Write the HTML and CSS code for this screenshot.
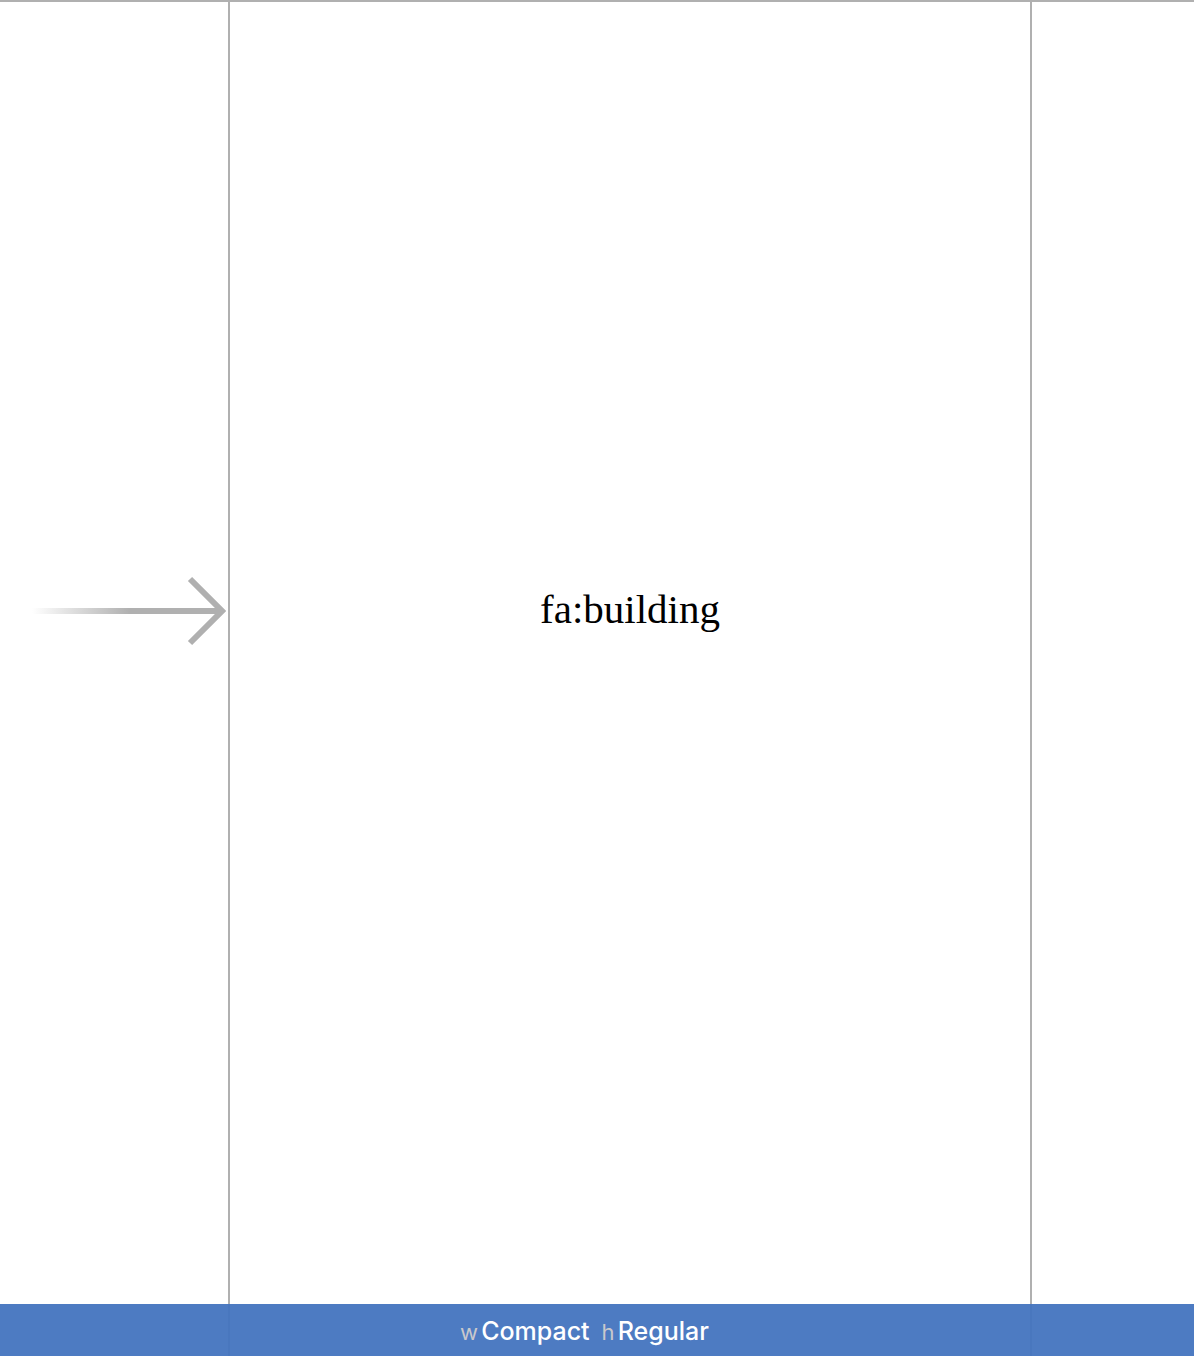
FILE: index.html
```html
<!DOCTYPE html>
<html lang="en">
<head>
<meta charset="utf-8">
<meta name="viewport" content="width=device-width, initial-scale=1">
<title>Storyboard</title>
<link rel="stylesheet" href="styles.css">
</head>
<body>
<main class="canvas">
  <div class="entry">
    <svg class="entry-arrow" width="194" height="70" viewBox="0 0 194 70" role="img" aria-label="Initial view controller">
      <defs>
        <linearGradient id="fade" gradientUnits="userSpaceOnUse" x1="0" y1="0" x2="98" y2="0">
          <stop offset="0" stop-color="#b0b0b0" stop-opacity="0"/>
          <stop offset="1" stop-color="#b0b0b0"/>
        </linearGradient>
      </defs>
      <rect x="0" y="32" width="188" height="6" fill="url(#fade)"/>
      <path d="M158 3 L190 35 L158 67" fill="none" stroke="#b0b0b0" stroke-width="6"/>
    </svg>
  </div>
  <section class="scene">
    <p class="scene-label">fa:building</p>
  </section>
</main>
<footer class="size-bar">
  <button class="size-class" type="button"><span class="axis">w</span><span class="value">Compact</span><span class="axis axis-height">h</span><span class="value">Regular</span></button>
</footer>
</body>
</html>
```

FILE: styles.css
```css
* {
  box-sizing: border-box;
}

body {
  display: grid;
  grid-template-rows: 1fr auto;
  min-height: 100vh;
  margin: 0;
  background: #fff;
}

/* The canvas runs on beneath the translucent size bar. */
.canvas {
  display: grid;
  grid-area: 1 / 1 / 3 / 2;
  grid-template-columns: 228fr 804fr 162fr;
  border-top: 2px solid #b0b0b0;
}

.entry {
  display: flex;
  align-items: center;
  justify-content: flex-end;
  padding: 0 2px 136px 0;
}

.entry-arrow {
  display: block;
}

.scene {
  display: flex;
  align-items: center;
  justify-content: center;
  padding-bottom: 140px;
  border: solid #b0b0b0;
  border-width: 0 2px;
}

.scene-label {
  margin: 0;
  color: #000;
  font: 41px/48px "Liberation Serif", serif;
}

.size-bar {
  display: flex;
  grid-area: 2 / 1 / 3 / 2;
  justify-content: center;
  padding: 12px 25px 9px 0;
  background: rgba(67, 116, 191, 0.95);
}

.size-class {
  display: flex;
  align-items: baseline;
  padding: 0;
  border: 0;
  background: none;
  color: #fff;
  font: 500 25px/30px Inter, sans-serif;
}

.axis {
  margin-right: 3px;
  color: #c8c8cc;
  font-size: 22px;
  font-weight: 400;
}

.axis-height {
  margin-left: 12px;
}
```
